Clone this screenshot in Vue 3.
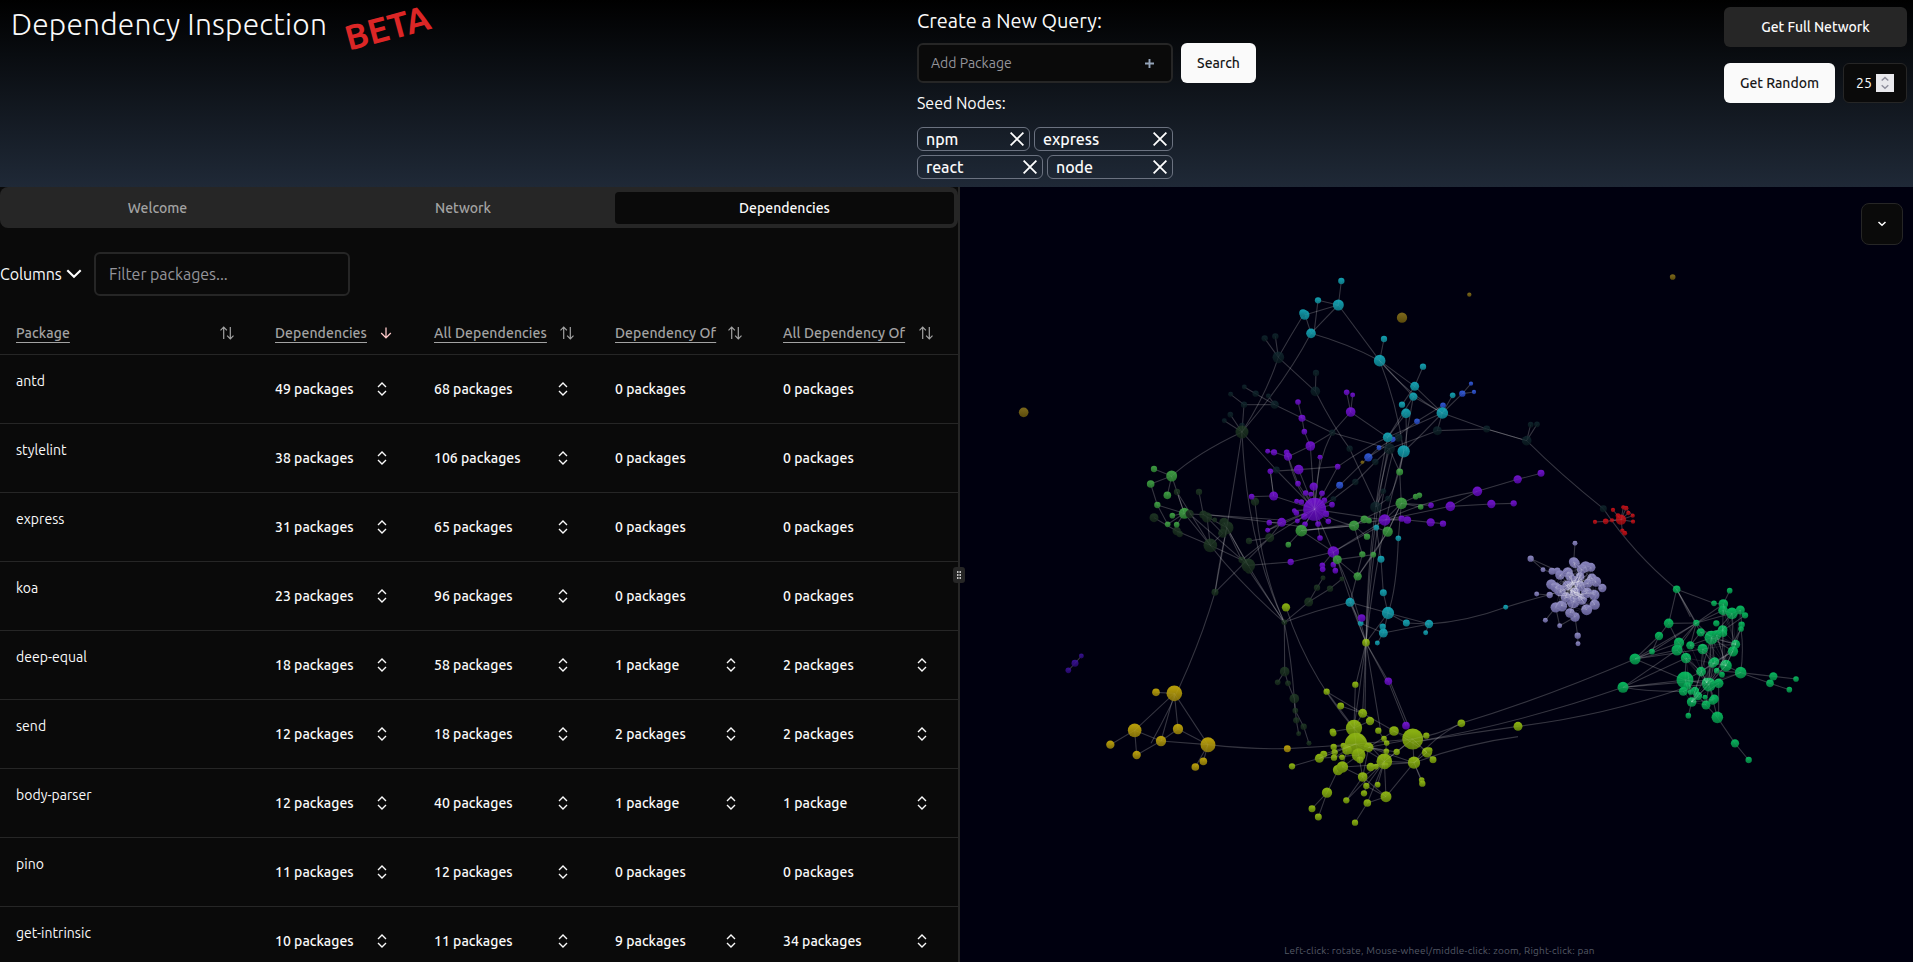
<script setup>
const tabs = [
  { label: 'Welcome', cls: 'welcome' },
  { label: 'Network', cls: 'network' },
  { label: 'Dependencies', cls: 'deps active' },
]
const columns = ['Package', 'Dependencies', 'All Dependencies', 'Dependency Of', 'All Dependency Of']
const rows = [
  ['antd', 49, 68, 0, 0],
  ['stylelint', 38, 106, 0, 0],
  ['express', 31, 65, 0, 0],
  ['koa', 23, 96, 0, 0],
  ['deep-equal', 18, 58, 1, 2],
  ['send', 12, 18, 2, 2],
  ['body-parser', 12, 40, 1, 1],
  ['pino', 11, 12, 0, 0],
  ['get-intrinsic', 10, 11, 9, 34],
]
const seeds = [['npm', 'w1'], ['express', 'w2'], ['react', 'w3'], ['node', 'w3']]
const count = (n) => `${n} ${n === 1 ? 'package' : 'packages'}`

// Scene regions: origin of each, with positions inside it in thirds of a pixel.
const origin = { a: [1120, 260], b: [1120, 440], c: [1050, 620], d: [1460, 480] }
const parse = (s) => s.trim().split(/\s+/).map((p) => p.split(',').map(Number))
const at = (k, x, y) => [origin[k][0] + x / 3, origin[k][1] + y / 3]

const groups = [
  ['a', 'teal', '434,235,9 466,229,9 475,292,17 588,339,9 586,394,14 373,381,7 407,401,9 332,403,7 445,408,7 464,434,12 372,434,9 331,464,8 313,482,7 366,497,8 637,518,9 689,566,9 766,606,9 706,666,9 952,512,13 1100,507,10 1220,542,14 1232,494,8 1251,493,8 808,566,16 835,533,12 790,694,8 767,741,16 804,716,8 469,630,10 640,717,8'],
  ['d', 'teal', '430,86,10'],
  ['a', 'forest', '366,516,19'],
  ['b', 'forest', '171,156,9 237,156,9 102,233,13 170,273,12 179,282,9 250,224,12 261,232,15 284,240,7 312,248,14 321,263,19 308,280,13 271,316,20 365,360,9 387,391,10 385,376,20 405,185,12 449,293,13 387,303,9 285,457,10 609,414,7 666,417,7 591,443,9 630,446,9 566,486,13 493,547,8'],
  ['c', 'forest', '704,155,14 683,187,8 714,190,8 733,236,14 736,272,8 739,301,9 761,320,9 746,341,7 777,370,7'],
  ['a', 'bronze', '846,173,15 1048,104,6 727,607,5 1658,51,8 -289,457,14'],
  ['a', 'blue', '1053,371,6 1062,396,6 1027,401,9 969,436,8 891,484,8 818,538,8 777,563,7 745,592,12 659,676,10'],
  ['a', 'purple', '680,397,8 698,405,7 692,456,14 534,426,8 546,475,10 553,515,8 571,558,14 443,574,7 462,577,9 500,577,8 504,590,12 600,592,7 653,620,8 451,634,8 536,629,14 534,671,8'],
  ['b', 'purple', '581,140,12 557,159,8 606,160,8 573,163,7 613,181,8 636,194,8 530,184,7 544,186,8 395,170,8 461,168,13 523,212,7 529,219,8 584,208,34 618,222,9 625,244,8 553,230,9 532,243,7 555,253,8 594,252,8 448,248,8 485,247,13 443,271,7 600,294,8 640,336,17 512,366,9 607,376,8 608,388,8 640,374,8 646,392,8 794,240,17 845,236,9 862,240,11 932,247,12 969,251,9 933,196,8 991,199,14 1114,192,12 1181,190,9 1072,154,14 1193,118,12 1263,100,10'],
  ['a', 'cyan', '664,63,9 594,121,9 655,135,16 554,165,14 549,159,11 573,220,14 792,237,9 779,302,17 909,320,9 884,379,13 880,410,12 846,434,9 858,460,14 967,459,17 998,406,8 803,532,14 851,574,18'],
  ['b', 'cyan', '769,263,8 835,295,8 783,358,10 790,458,10 804,519,18 690,487,13 722,550,8 788,560,9 790,579,13 772,609,7 859,549,10 927,552,12 917,578,7 1157,502,7'],
  ['b', 'purple', '725,534,11'],
  ['b', 'green', '102,87,9 155,108,16 92,132,11 142,166,11 112,195,9 193,220,16 157,227,8 143,253,8 170,254,8 544,272,17 505,314,8 702,257,15 733,238,11 747,242,8 741,290,9 803,275,15 844,190,17 887,170,8 898,166,8 902,201,8 839,96,10 727,343,9 760,344,8 713,409,12 652,359,13'],
  ['b', 'forest', '209,222,12'],
  ['b', 'lime', '498,502,12 738,608,11'],
  ['c', 'gold', '373,220,23 318,217,11 254,331,20 384,327,15 333,363,15 474,374,22 181,374,12 260,405,12 460,424,11 436,441,11 712,386,10'],
  ['c', 'indigo', '94,108,7 75,130,10 55,151,8'],
  ['c', 'purple', '1015,184,11 1068,317,11'],
  ['c', 'lime', '916,194,9 830,215,9 872,258,10 938,280,13 960,303,12 912,324,24 848,335,9 850,340,9 985,332,9 1032,333,14 1088,357,31 1129,347,9 1234,310,11 918,372,33 851,381,9 880,377,8 854,397,9 821,403,10 852,413,9 808,415,13 876,412,8 891,390,14 956,382,14 926,405,20 930,420,10 1002,356,8 1010,369,8 1009,394,8 1040,396,9 1003,424,23 1005,437,10 962,441,12 978,440,8 1092,428,18 1131,397,15 1138,391,9 1149,419,10 864,450,15 877,441,17 726,439,9 938,471,14 1115,480,8 1117,491,9 949,498,9 983,494,8 942,520,9 831,518,15 889,541,9 952,549,11 1008,530,16 786,566,10 805,591,10 915,608,9'],
  ['d', 'lime', '174,739,13'],
  ['d', 'red', '405,126,6 437,124,8 456,121,6 459,90,6 474,107,7 483,119,15 490,82,6 498,85,7 505,99,6 518,107,6 519,125,6 487,152,6 494,160,7'],
  ['d', 'lavender', '345,190,7 212,236,9 249,269,7 276,274,10 292,272,9 300,285,14 323,277,15 341,246,14 345,250,14 377,260,16 393,262,13 365,268,14 396,295,14 408,305,15 427,324,12 403,345,15 404,374,15 380,389,16 345,411,14 330,399,14 305,378,16 287,382,15 274,313,15 287,322,15 300,332,17 340,365,19 365,358,16 340,302,14 380,338,16 269,345,9 230,342,7 256,421,7 299,437,7 353,467,9 354,491,7 318,352,15 322,316,14 360,318,15 330,290,13 384,310,13 360,290,13 345,338,15'],
  ['d', 'mint', '650,328,11 809,332,8 762,370,8 790,372,14 789,391,14 816,400,17 841,390,13 855,406,9 845,434,9 843,447,8 769,430,9 709,429,9 626,430,14 597,468,12 722,457,12 788,450,14 790,460,11 754,473,20 770,465,14 691,496,12 657,488,15 651,510,16 576,515,8 728,507,15 827,493,13 819,514,15 678,534,15 525,537,16 489,622,16 764,545,13 758,550,13 798,557,17 723,575,14 770,572,8 786,584,8 842,578,17 940,589,12 1008,597,8 930,610,11 988,629,8 675,600,25 682,618,11 670,634,13 747,614,20 740,608,14 776,610,14 705,633,12 692,636,8 714,648,12 735,652,7 763,657,13 758,662,12 738,675,13 695,666,14 685,707,8 772,712,17 825,790,12 866,840,9'],
]
const nodes = groups.flatMap(([k, color, s]) =>
  parse(s).map(([x, y, r]) => {
    const [cx, cy] = at(k, x, y)
    return { cx, cy, r: r / 3 + 0.15, color }
  })
)

// Each link is x1,y1,x2,y2 with an optional curve control point.
const links = {
  a: `664,63,655,135 594,121,655,135 554,165,655,135 573,220,655,135 594,121,582,220 554,160,573,220 550,165,475,292,510,230 655,135,779,302 573,220,779,302,680,250
    573,220,366,516,500,360 475,292,366,516,440,400 434,235,475,292 466,229,475,292 475,292,586,394 588,339,586,394 586,394,689,566,640,500 689,566,780,760,735,665 792,237,779,302
    779,302,884,379 779,302,967,459,860,400 779,302,880,410 779,302,851,574,830,430 884,379,909,320 884,379,846,434 884,379,967,459 880,410,967,459 880,410,803,532 858,460,803,532 880,410,851,574 858,460,860,574
    967,459,851,574,890,540 967,459,803,532 967,459,1100,507 1100,507,1220,542 1100,507,1220,542 952,512,1100,507 967,459,952,512 952,512,808,566 998,406,967,459 1027,401,967,459 1053,371,1027,401 1062,396,1027,401
    969,436,891,484 891,484,818,538 818,538,777,563 777,563,745,592 745,592,659,676 659,676,584,748 1220,542,1232,494 1220,542,1251,493 1220,542,1450,746,1322,644
    373,381,407,401 407,401,464,434 445,408,464,434 332,403,372,434 372,434,464,434 372,434,366,516 331,464,366,516 313,482,366,516 464,434,637,518 637,518,808,566 637,518,692,456 692,456,803,532 680,397,692,456 698,405,692,456
    637,518,571,558 637,518,584,748,590,600 534,426,546,475 546,475,553,515 553,515,571,558 571,558,584,748 571,558,504,590 443,574,462,577 462,577,504,590 500,577,504,590 504,590,534,671 504,590,584,748,530,700 534,671,584,748
    451,634,536,629 536,629,653,620 536,629,584,748 451,634,461,708 653,620,803,532,740,560 653,620,584,748 600,592,584,748 469,630,584,748 469,630,366,516 366,516,155,648,230,580
    366,516,285,997,330,760 366,516,493,1087,380,850 745,592,835,533 766,606,808,566 706,666,766,606 706,666,640,717 640,717,584,748 851,574,839,635 851,574,804,716,830,680 839,635,844,730 808,566,767,741 808,566,839,635 803,532,767,741,780,640 818,580,738,1148,760,800 851,574,738,1148,770,850 790,694,767,741 804,716,767,741`,
  b: `102,87,155,108 92,132,155,108 155,108,142,166 155,108,193,220 92,132,112,195 112,195,143,253 112,195,193,220 193,220,157,227 193,220,143,253 193,220,170,254 171,156,193,220 171,156,271,316 237,156,250,224 193,220,271,316 209,222,250,224 209,222,385,376
    102,233,170,273 170,273,271,316 250,224,321,263 261,232,271,316 261,232,308,280 312,248,365,360 321,263,385,376 308,280,271,316 321,263,285,457,300,350 271,316,365,360 271,316,493,547,360,430 321,263,493,547,400,410 387,391,493,547 285,457,449,293 285,457,93,910,220,680 449,293,485,247 387,303,449,293 365,360,449,293
    405,185,493,547,425,400 385,376,512,366 512,366,640,336 261,224,544,260,410,240 271,225,485,240 395,170,461,168 461,168,584,208 451,94,461,168 448,248,485,247 485,247,584,208 443,271,485,247 443,271,584,208 449,293,584,208 405,185,395,170
    584,208,544,272 544,272,505,314 544,272,640,336 544,272,702,257 544,272,794,240 584,208,600,294 584,208,640,336 584,208,625,244 584,208,636,194 584,208,606,160 584,208,557,159 584,208,581,140 584,208,523,212 584,208,532,243 584,208,555,253 584,208,594,252 584,208,530,184 584,208,613,181
    584,208,794,240 584,208,702,257,640,245 640,336,794,240 640,336,769,263 640,336,607,376 640,336,640,374 640,336,646,392 652,359,713,409 652,359,760,344 640,336,738,608,700,450 652,359,738,608,690,480 702,257,844,190,770,210 702,257,733,238 702,257,741,290 702,257,727,343 702,257,544,272 727,343,690,487 760,344,713,409
    803,275,760,344 803,275,844,190 803,275,713,409 803,275,769,263 844,190,887,170 844,190,902,201 844,190,803,275 844,190,794,240 844,190,933,196 794,240,845,236 794,240,862,240 862,240,932,247 932,247,969,251 794,240,991,199 794,240,1072,154,920,180 1072,154,991,199 991,199,1114,192 1114,192,1181,190 1072,154,1193,118 1193,118,1263,100
    769,263,783,358 783,358,790,458 790,458,804,519 835,295,844,190 835,295,804,519,830,450 767,201,738,608,740,400 803,30,738,608,745,320 690,487,804,519 804,519,859,549 804,519,927,552 859,549,927,552 804,519,790,579 804,519,738,608 790,579,927,552 917,578,927,552 927,552,1157,502,1040,545 1157,502,1380,440,1240,475 722,550,690,487 722,550,790,579 690,487,738,608 772,609,790,579
    493,547,566,486 566,486,591,443 591,443,609,414 566,486,630,446 630,446,666,417 690,487,493,547,590,510 493,547,494,695 493,547,523,776,515,660 498,502,750,920,570,730 738,608,706,740 738,608,735,820 738,608,728,820 738,608,782,873,760,740 738,608,805,724 738,608,800,724 738,608,702,864`,
  c: `94,108,75,130 75,130,55,151 318,217,373,220 373,220,254,331 373,220,333,363 373,220,384,327 373,220,474,374 254,331,181,374 254,331,333,363 254,331,260,405 260,405,333,363 333,363,384,327 333,363,474,374 384,327,474,374 474,374,460,424 474,374,436,441 474,374,712,386,600,388 712,386,918,372,820,380
    704,155,683,187 704,155,714,190 714,190,733,236 733,236,736,272 736,272,739,301 736,272,761,320 739,301,746,341 761,320,777,370 733,236,736,280 916,194,912,324 830,215,938,280 830,215,912,324 872,258,938,280 938,280,912,324 938,280,1032,333 960,303,912,324 1015,184,1068,317 1020,184,1075,317 1032,333,1088,357 1032,333,956,382 985,332,1010,369
    1088,357,1129,347 1088,357,1234,310,1165,345 1088,357,1131,397 1088,357,1092,428 1088,357,956,382 1088,357,1003,424 1088,357,918,372 1088,357,1040,396 1092,428,1404,350,1250,370 1092,428,1234,310,1150,350 1092,428,1131,397 1131,397,1149,419 1092,428,1117,491 1092,428,1115,480 1092,428,1008,530 1092,428,1003,424 1092,428,956,382 1092,428,877,441
    912,324,918,372 912,324,848,335 912,324,1003,424 918,372,1003,424 918,372,926,405 918,372,956,382 918,372,851,381 918,372,821,403 918,372,808,415 808,415,926,405 726,439,808,415 891,390,852,413 891,390,877,441 926,405,877,441 926,405,938,471 926,405,930,430 877,441,938,471 956,382,926,405 956,382,1009,394 956,382,1040,396
    956,382,938,471 1003,424,938,471 1003,424,1008,530 1003,424,952,549 1003,424,949,498 1003,424,983,494 1003,424,962,441 1003,424,889,541 938,471,889,541 938,471,1008,530 938,471,949,498 864,450,831,518 831,518,786,566 831,518,805,591 952,549,915,608 952,549,1008,530 949,498,1008,530 942,520,949,498 1003,424,1010,369 1003,424,1040,396`,
  d: `430,86,650,328,520,220 405,126,437,124 437,124,483,119 456,121,483,119 459,90,483,119 483,119,490,82 483,119,498,85 498,85,518,107 505,99,483,119 483,119,519,125 483,119,487,152 483,119,518,107
    345,190,341,246 212,236,292,272 212,236,249,269 249,269,300,285 269,345,230,342 269,345,300,332 287,382,256,421 287,382,299,437 299,437,345,411 345,411,353,467 353,467,354,491
    650,328,626,430 650,328,762,370 650,328,709,429 650,328,722,457 650,328,691,410 762,370,790,372 809,332,790,372 626,430,709,429 626,430,597,468 626,430,678,534 597,468,525,537 597,468,576,515 709,429,576,515 709,429,525,537 709,429,657,488 709,429,816,400 709,429,790,372 709,429,789,391 709,429,754,473 709,429,651,510 709,429,691,496
    525,537,657,488 525,537,576,515 525,537,651,510 525,537,675,600 525,537,728,507 489,622,675,600 489,622,670,634,560,636 489,622,678,534 489,622,747,600 489,622,651,510 525,537,3,730,250,655 489,622,-142,787,180,730 174,739,-142,787,20,760 174,739,670,625,420,710
    816,400,841,390 816,400,789,391 816,400,754,473 841,390,845,434 843,447,842,578,852,510 816,400,819,514 855,406,770,465 845,434,827,493 754,473,827,493 754,473,691,496 722,457,691,496 754,473,723,575 754,473,764,545 754,473,819,514 754,473,747,614 770,465,798,557 788,450,788,557 728,507,723,575 728,507,758,550 678,534,723,575 678,534,675,600 827,493,798,557 819,514,764,545 819,514,723,575
    843,447,747,614 798,557,747,614 798,557,842,578 764,545,723,575 764,545,747,614 723,575,675,600 723,575,747,614 723,575,705,633 842,578,940,589 842,578,930,610 940,589,1008,597 930,610,988,629 842,578,747,614 842,578,770,572 675,600,747,614 675,600,714,648 747,614,763,657 747,614,738,675 747,614,695,666 747,614,772,712 776,610,776,712 695,666,685,707 738,675,772,712 772,712,825,790 825,790,866,840 714,648,738,675 682,618,747,614`,
}
const toPath = (k, s) =>
  parse(s).map(([a, b, c, d, e, f]) => {
    const p = at(k, a, b)
    const q = at(k, c, d)
    return f === undefined ? `M${p}L${q}` : `M${p}Q${at(k, e, f)} ${q}`
  })
const edges = Object.entries(links).flatMap(([k, s]) => toPath(k, s))
const edgePath = edges.join('')

// Tightly woven links inside the densest clusters.
function weave(color, limit, step, keep) {
  const pts = nodes.filter((n) => n.color === color && n.r > 3.9)
  let out = ''
  pts.forEach((p, i) => {
    pts.forEach((q, j) => {
      if (j <= i || (i * 7 + j * step) % keep) return
      if (Math.hypot(p.cx - q.cx, p.cy - q.cy) < limit) out += `M${p.cx},${p.cy}L${q.cx},${q.cy}`
    })
  })
  return out
}
const lavenderWeave = weave('lavender', 34, 5, 3)
const mintWeave = weave('mint', 50, 3, 7)
const limeWeave = weave('lime', 42, 5, 7)
// Short spokes radiating from the bright core of the lavender cluster.
const core = Array.from({ length: 46 }, (_, i) => {
  const a = i * 2.4
  const r = 5 + ((i * 7) % 12)
  const x = 1574 + ((i * 5) % 9) - 4
  const y = 589 + ((i * 3) % 13) - 6
  return `M${x},${y}l${(Math.cos(a) * r).toFixed(1)},${(Math.sin(a) * r).toFixed(1)}`
}).join('')

const palette = {
  teal: ['#0e2129', '#08161c'], forest: ['#1c3222', '#122218'], bronze: ['#79651a', '#5c4c0c'],
  blue: ['#2f55cc', '#1f3a9d'], purple: ['#6a12c2', '#4d0898'], cyan: ['#139aaa', '#0c7481'],
  green: ['#3c9641', '#27712d'], lime: ['#88ae12', '#607f0a'], gold: ['#b39a0a', '#83700a'],
  indigo: ['#35108a', '#240866'], red: ['#bb1018', '#850a10'], lavender: ['#8581b9', '#615d92'],
  mint: ['#08ae5a', '#057d40'],
}
</script>

<template>
  <div class="page">
    <header class="top">
      <div class="brand">
        <h1>Dependency Inspection</h1>
        <span class="beta">BETA</span>
      </div>
      <div class="query">
        <h2>Create a New Query:</h2>
        <div class="query-row">
          <div class="add"><span>Add Package</span>
            <svg width="9" height="9" viewBox="0 0 9 9"><path d="M4.5 0v9M0 4.5h9" stroke="#94a3b8" stroke-width="1.9" /></svg>
          </div>
          <button class="btn light search">Search</button>
        </div>
        <p class="seed-title">Seed Nodes:</p>
        <div class="chips">
          <div v-for="s in seeds" :key="s[0]" class="chip" :class="s[1]">
            <span>{{ s[0] }}</span>
            <svg width="14" height="14" viewBox="0 0 14 14"><path d="M.6.6l12.8 12.8M13.4.6L.6 13.4" stroke="#fff" stroke-width="1.8" /></svg>
          </div>
        </div>
      </div>
      <div class="actions">
        <button class="btn dark">Get Full Network</button>
        <div class="random-row">
          <button class="btn light random">Get Random</button>
          <div class="number"><span>25</span>
            <i class="spin"><svg width="18" height="18" viewBox="0 0 18 18"><path d="M5.7 6.5L9 3.6l3.3 2.9M5.7 11.3L9 14.2l3.3-2.9" fill="none" stroke="#8f8f9d" stroke-width="1.5" /></svg></i>
          </div>
        </div>
      </div>
    </header>
    <main class="body">
      <section class="left">
        <nav class="tabs">
          <div v-for="t in tabs" :key="t.label" class="tab" :class="t.cls">{{ t.label }}</div>
        </nav>
        <div class="tools">
          <span class="columns-label">Columns</span>
          <svg class="chev" width="16" height="10" viewBox="0 0 16 10"><path d="M1.3 1.3L8 7.8l6.7-6.5" fill="none" stroke="#fff" stroke-width="2.1" /></svg>
          <div class="filter">Filter packages...</div>
        </div>
        <div class="table">
          <div class="row head">
            <div v-for="(c, i) in columns" :key="c" class="cell">
              <span class="th">{{ c }}</span>
              <svg v-if="i === 1" class="sort" width="16" height="16" viewBox="0 0 16 16"><path d="M8 2.6v10.2M3.2 8L8 12.9 12.8 8" fill="none" stroke="#fecaca" stroke-width="1.3" /></svg>
              <svg v-else class="sort" width="16" height="16" viewBox="0 0 16 16"><path d="M4.7 14V2.3M1.5 5.4l3.2-3.2 3.2 3.2M11.3 2v11.7M8.1 10.6l3.2 3.2 3.2-3.2" fill="none" stroke="#a3a3a3" stroke-width="1.2" /></svg>
            </div>
          </div>
          <div v-for="r in rows" :key="r[0]" class="row">
            <div class="cell name">{{ r[0] }}</div>
            <div v-for="i in 4" :key="i" class="cell count">
              <span>{{ count(r[i]) }}</span>
              <svg v-if="r[i]" width="16" height="16" viewBox="0 0 16 16"><path d="M4 6l4-4 4 4M4 10l4 4 4-4" fill="none" stroke="#fafafa" stroke-width="1.35" /></svg>
            </div>
          </div>
        </div>
      </section>
      <div class="divider">
        <i class="grip"><svg width="12" height="16" viewBox="0 0 12 16"><path d="M4 4h1.5v2H4zM6.5 4H8v2H6.5zM4 7h1.5v2H4zM6.5 7H8v2H6.5zM4 10h1.5v2H4zM6.5 10H8v2H6.5z" fill="#c4c4c4" /></svg></i>
      </div>
      <section class="scene">
        <svg class="graph" width="953" height="775" viewBox="960 187 953 775">
          <defs>
            <linearGradient v-for="(p, name) in palette" :id="'g-' + name" :key="name" x1="0" y1="0" x2="0" y2="1">
              <stop offset="0.15" :stop-color="p[0]" />
              <stop offset="0.95" :stop-color="p[1]" />
            </linearGradient>
          </defs>
          <path v-for="(d, i) in edges" :key="'e' + i" class="edges" :d="d" />
          <circle v-for="(n, i) in nodes" :key="i" :cx="n.cx" :cy="n.cy" :r="n.r" :fill="`url(#g-${n.color})`" />
          <path class="over" :d="edgePath" />
          <path class="weave" :d="lavenderWeave" />
          <path class="core" :d="core" />
          <path class="weave" :d="mintWeave" />
          <path class="weave" :d="limeWeave" />
        </svg>
        <button class="fold"><svg width="10" height="6" viewBox="0 0 10 6"><path d="M1.5 1L5 4.3 8.5 1" fill="none" stroke="#fff" stroke-width="1.5" /></svg></button>
        <p class="hint">Left-click: rotate, Mouse-wheel/middle-click: zoom, Right-click: pan</p>
      </section>
    </main>
  </div>
</template>

<style>
body { margin: 0; background: #0a0a0a; overflow: hidden; }
</style>

<style scoped>
* { box-sizing: border-box; }
.page { width: 1913px; height: 962px; overflow: hidden; display: flex; flex-direction: column; background: #0a0a0a; color: #fafafa; font-family: Ubuntu, "Noto Sans", "Open Sans", sans-serif; font-size: 14px; line-height: 20px; }
h1, h2, p { margin: 0; font-weight: 400; }
button { font: inherit; border: 0; padding: 0; }
svg { display: block; flex: none; }
.top { height: 187px; flex: none; display: flex; background: linear-gradient(to bottom, #000, #1f2937); }
.brand { width: 917px; display: flex; align-items: flex-start; padding-left: 11px; }
h1 { width: 318px; font-size: 30px; font-weight: 300; line-height: 36px; padding-top: 6px; white-space: nowrap; letter-spacing: 0.2px; }
.beta { margin: 3px 0 0 15px; font-size: 35px; line-height: 48px; font-weight: 600; color: #dc2626; transform: rotate(-15deg); }
.query { width: 339px; }
h2 { font-size: 20px; line-height: 28px; padding-top: 7px; white-space: nowrap; letter-spacing: -0.03px; }
.query-row { display: flex; gap: 8px; margin-top: 8px; }
.add { width: 256px; height: 40px; border: 2px solid #262626; border-radius: 6px; background: #0a0a0a; color: #94949a; display: flex; align-items: center; justify-content: space-between; padding: 0 17px 0 12px; }
.btn { height: 40px; border-radius: 6px; font-weight: 500; letter-spacing: -0.03px; }
.light { background: #fafafa; color: #171717; }
.dark { background: #262626; color: #fafafa; width: 183px; }
.search { width: 75px; }
.seed-title { font-size: 16px; line-height: 24px; margin-top: 8px; letter-spacing: -0.03px; }
.chips { width: 256px; display: flex; flex-wrap: wrap; gap: 4px; margin-top: 12px; }
.chip { height: 24px; border: 1px solid #6b7280; border-radius: 6px; padding: 0 5px 0 8px; display: flex; align-items: center; justify-content: space-between; font-size: 16px; font-weight: 550; letter-spacing: -0.05px; }
.w1 { width: 113px; }
.w2 { width: 139px; }
.w3 { width: 126px; }
.actions { margin-left: auto; width: 189px; padding-top: 7px; }
.random-row { display: flex; gap: 8px; margin-top: 16px; }
.random { width: 111px; }
.number { width: 64px; height: 40px; border: 1px solid #262626; border-radius: 6px; background: #0a0a0a; display: flex; align-items: center; justify-content: space-between; padding: 0 12px; }
.spin { background: #e9e9ed; }
.body { flex: 1; min-height: 0; display: flex; }
.left { width: 958px; flex: none; overflow: hidden; }
.tabs { height: 41px; background: #262626; border-radius: 8px; display: flex; padding: 5px 4px 4px; color: #a3a3a3; font-weight: 500; }
.tab { height: 32px; display: flex; align-items: center; justify-content: center; padding-bottom: 1px; }
.welcome { width: 307px; }
.network { width: 304px; }
.deps { width: 339px; }
.active { background: #0a0a0a; color: #fafafa; border-radius: 4px; }
.tools { height: 44px; margin-top: 24px; display: flex; align-items: center; font-size: 16px; }
.columns-label { width: 62px; letter-spacing: -0.1px; }
.chev { margin: 0 12px 0 4px; }
.filter { width: 256px; height: 44px; border: 2px solid #262626; border-radius: 6px; color: #94949a; display: flex; align-items: center; padding-left: 13px; letter-spacing: -0.04px; }
.table { margin-top: 10px; }
.row { height: 69px; display: grid; grid-template-columns: 259px 159px 181px 168px 191px; border-bottom: 1px solid #262626; }
.head { height: 49px; color: #a3a3a3; font-weight: 500; }
.cell { display: flex; align-items: center; justify-content: space-between; padding: 0 28px 0 16px; white-space: nowrap; }
.head .cell { padding: 5px 24px 0 16px; }
.th { text-decoration: underline; text-underline-offset: 4px; letter-spacing: 0.1px; }
.name { align-items: flex-start; padding-top: 16px; letter-spacing: 0.03px; }
.count { font-weight: 550; letter-spacing: 0.02px; }
.divider { width: 2px; flex: none; background: #262626; position: relative; z-index: 2; }
.grip { position: absolute; left: -5px; top: 380px; width: 12px; height: 16px; background: #262626; border-radius: 3px; }
.scene { flex: 1; position: relative; background: #00000f; }
.edges { fill: none; stroke: #fff; stroke-opacity: 0.17; stroke-width: 1.1; }
.over { fill: none; stroke: #fff; stroke-opacity: 0.05; stroke-width: 1; }
.weave { fill: none; stroke: #fff; stroke-opacity: 0.1; stroke-width: 0.9; }
.core { fill: none; stroke: #fff; stroke-opacity: 0.28; stroke-width: 0.9; }
.fold { position: absolute; top: 16px; right: 10px; width: 42px; height: 42px; border: 1px solid #262626; border-radius: 8px; background: #0a0a0a; display: flex; align-items: center; justify-content: center; }
.hint { position: absolute; left: 6px; right: 0; bottom: 3px; text-align: center; font-size: 10px; line-height: 16px; letter-spacing: 0.2px; color: #555a66; }
</style>
